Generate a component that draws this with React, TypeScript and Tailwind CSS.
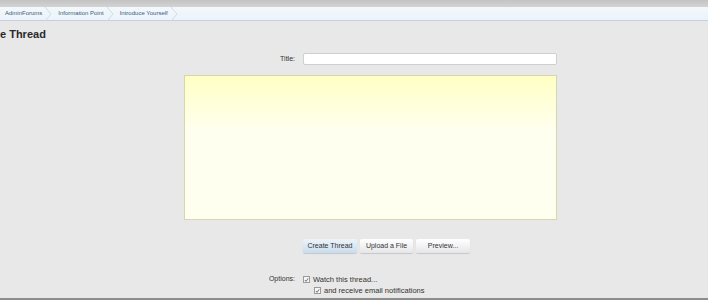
import React from "react";

function Crumb({ label, first }: { label: string; first?: boolean }) {
  return (
    <div className="relative flex h-full items-center">
      <span className={`${first ? "pl-[5px]" : "pl-[6px]"} pr-[10px] text-[6px] text-[#3a5a78]`}>{label}</span>
      <svg width="8" height="14" viewBox="0 0 8 14" className="absolute right-0 top-0">
        <path d="M1 0 L7 7 L1 14" fill="none" stroke="#cfdbe6" strokeWidth="1" />
      </svg>
    </div>
  );
}

function Check({ className = "" }: { className?: string }) {
  return (
    <span className={`inline-flex h-[7px] w-[7px] items-center justify-center border border-[#9a9a9a] bg-[#f6f6f6] ${className}`}>
      <svg width="6" height="6" viewBox="0 0 6 6">
        <path d="M1 3 L2.5 4.6 L5 1" fill="none" stroke="#444" strokeWidth="0.9" />
      </svg>
    </span>
  );
}

export default function App() {
  return (
    <div
      className="flex h-[300px] w-[708px] flex-col overflow-hidden bg-[#e8e8e8] text-[#333]"
      style={{ fontFamily: "'Liberation Sans', Arial, sans-serif" }}
    >
      <div className="h-[7px] bg-gradient-to-b from-[#c3c3c3] to-[#d3d3d3]" />
      <div className="flex h-[14px] items-center border-b border-[#c4d0de] bg-gradient-to-b from-[#f3f8fc] to-[#ebf4fa]">
        <Crumb label="AdminForums" first />
        <Crumb label="Information Point" />
        <Crumb label="Introduce Yourself" />
      </div>
      <div className="pl-0 pt-[5px]">
        <h1 className="text-[11px] font-bold leading-[16px] text-[#2a2a2a]">e Thread</h1>
      </div>
      <div className="mt-[11px] flex items-center">
        <div className="w-[296px] pr-[1px] text-right text-[7px] text-[#333]">Title:</div>
        <div className="ml-[7px] h-[12px] w-[254px] rounded-[2px] border border-[#cfcfcf] bg-white" />
      </div>
      <div className="ml-[184px] mt-[10px] h-[145px] w-[373px] border border-[#d6d6b0] bg-gradient-to-b from-[#ffffc4] via-[#fffff0] via-40% to-[#fffff0]" />
      <div className="ml-[303px] mt-[19px] flex gap-[3px]">
        <div className="flex h-[14px] w-[54px] items-center justify-center rounded-[2px] bg-gradient-to-b from-[#eef4fa] to-[#c8dcee] text-[7px] text-[#333] shadow-[0_1px_1px_rgba(0,0,0,0.15)]">
          Create Thread
        </div>
        <div className="flex h-[14px] w-[53px] items-center justify-center rounded-[2px] bg-gradient-to-b from-[#ffffff] to-[#e6e6ea] text-[7px] text-[#333] shadow-[0_1px_1px_rgba(0,0,0,0.15)]">
          Upload a File
        </div>
        <div className="flex h-[14px] w-[54px] items-center justify-center rounded-[2px] bg-gradient-to-b from-[#ffffff] to-[#e6e6ea] text-[7px] text-[#333] shadow-[0_1px_1px_rgba(0,0,0,0.15)]">
          Preview...
        </div>
      </div>
      <div className="mt-[21px] flex items-center">
        <div className="w-[296px] pr-[1px] text-right text-[7px] text-[#333]">Options:</div>
        <Check className="ml-[7px]" />
        <span className="ml-[3px] text-[7.5px] text-[#333]">Watch this thread...</span>
      </div>
      <div className="flex items-center">
        <Check className="ml-[314px]" />
        <span className="ml-[3px] text-[7.5px] text-[#333]">and receive email notifications</span>
      </div>
      <div className="mt-auto h-[2px] bg-[#8c8c8c]" />
    </div>
  );
}
